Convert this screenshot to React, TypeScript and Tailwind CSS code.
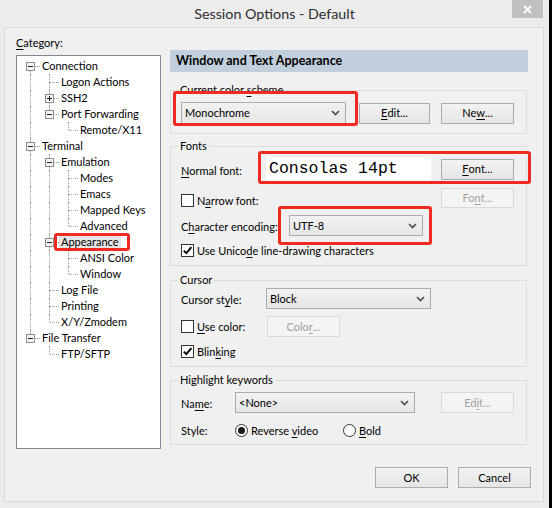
import React from "react";

type TNode = { label: string; children?: TNode[]; selected?: boolean; plus?: boolean };

const tree: TNode[] = [
  {
    label: "Connection",
    children: [
      { label: "Logon Actions" },
      { label: "SSH2", plus: true },
      { label: "Port Forwarding", children: [{ label: "Remote/X11" }] },
    ],
  },
  {
    label: "Terminal",
    children: [
      {
        label: "Emulation",
        children: [{ label: "Modes" }, { label: "Emacs" }, { label: "Mapped Keys" }, { label: "Advanced" }],
      },
      { label: "Appearance", selected: true, children: [{ label: "ANSI Color" }, { label: "Window" }] },
      { label: "Log File" },
      { label: "Printing" },
      { label: "X/Y/Zmodem" },
    ],
  },
  { label: "File Transfer", children: [{ label: "FTP/SFTP" }] },
];

type Row = { node: TNode; guides: boolean[]; isLast: boolean; isFirstRoot: boolean };

function flatten(nodes: TNode[], guides: boolean[], out: Row[], root: boolean) {
  nodes.forEach((n, i) => {
    const isLast = i === nodes.length - 1;
    out.push({ node: n, guides, isLast, isFirstRoot: root && i === 0 });
    if (n.children) flatten(n.children, [...guides, !isLast], out, false);
  });
  return out;
}

const rows = flatten(tree, [], [], true);

function Ul({ children }: { children: React.ReactNode }) {
  return <span className="underline decoration-1 underline-offset-[2px]">{children}</span>;
}

function TreeRow({ r }: { r: Row }) {
  const hasBox = !!r.node.children || !!r.node.plus;
  return (
    <div className="flex h-[16px] items-center">
      {r.guides.map((g, i) => (
        <div key={i} className="relative h-[16px] w-[19px] shrink-0">
          {g && <span className="absolute left-[9px] top-0 h-[16px] border-l border-dotted border-[#a0a0a0]" />}
        </div>
      ))}
      <div className="relative h-[16px] w-[19px] shrink-0">
        {!r.isFirstRoot && (
          <span className="absolute left-[9px] top-0 h-[8px] border-l border-dotted border-[#a0a0a0]" />
        )}
        {!r.isLast && (
          <span className="absolute left-[9px] top-[8px] h-[8px] border-l border-dotted border-[#a0a0a0]" />
        )}
        <span className="absolute left-[10px] top-[8px] w-[9px] border-t border-dotted border-[#a0a0a0]" />
        {hasBox && (
          <span className="absolute left-[5px] top-[4px] flex h-[9px] w-[9px] items-center justify-center border border-[#8f8f8f] bg-[#f3f3f3]">
            <span className="relative block h-[1px] w-[5px] bg-[#1c2433]" />
            {r.node.plus && <span className="absolute left-[3px] top-[1px] block h-[5px] w-[1px] bg-[#1c2433]" />}
          </span>
        )}
      </div>
      <span
        className={
          "h-[16px] whitespace-nowrap px-[2px] leading-[16px] text-black " + (r.node.selected ? "bg-[#e5e5e5]" : "")
        }
      >
        {r.node.label}
      </span>
    </div>
  );
}

function Chevron() {
  return (
    <svg width="9" height="6" viewBox="0 0 9 6" className="shrink-0">
      <path d="M1 1 L4.5 4.5 L8 1" fill="none" stroke="#4a4a4a" strokeWidth="1.6" />
    </svg>
  );
}

function Select({ value, w, h = "h-[21px]" }: { value: string; w: string; h?: string }) {
  return (
    <div
      className={`${w} ${h} flex shrink-0 items-center justify-between border border-[#acacac] bg-gradient-to-b from-[#f2f2f2] to-[#e6e6e6] pl-[3px] pr-[5px]`}
    >
      <span className="whitespace-nowrap text-black">{value}</span>
      <Chevron />
    </div>
  );
}

function Btn({
  children,
  w = "w-[73px]",
  disabled,
  h = "h-[21px]",
}: {
  children: React.ReactNode;
  w?: string;
  disabled?: boolean;
  h?: string;
}) {
  return (
    <div
      className={
        `${w} ${h} flex shrink-0 items-center justify-center border ` +
        (disabled
          ? "border-[#d9d9d9] bg-[#f4f4f4] text-[#a0a0a0]"
          : "border-[#acacac] bg-gradient-to-b from-[#f2f2f2] to-[#e5e5e5] text-black")
      }
    >
      {children}
    </div>
  );
}

function Check({ checked }: { checked?: boolean }) {
  return (
    <span className="flex h-[13px] w-[13px] shrink-0 items-center justify-center border border-[#333] bg-white">
      {checked && (
        <svg width="11" height="11" viewBox="0 0 11 11">
          <path d="M1.8 5.6 L4.3 8.2 L9.4 2.2" fill="none" stroke="#000" strokeWidth="1.9" />
        </svg>
      )}
    </span>
  );
}

function Radio({ checked }: { checked?: boolean }) {
  return (
    <span className="flex h-[13px] w-[13px] shrink-0 items-center justify-center rounded-full border border-[#333] bg-white">
      {checked && <span className="h-[7px] w-[7px] rounded-full bg-[#1a1a1a]" />}
    </span>
  );
}

function Group({ legend, children, cls }: { legend: React.ReactNode; children: React.ReactNode; cls: string }) {
  return (
    <fieldset className={`w-[357px] border border-[#dcdcdc] ${cls}`}>
      <legend className="ml-[7px] px-[2px] leading-[16px] text-black">{legend}</legend>
      <div className="pl-[10px]">{children}</div>
    </fieldset>
  );
}

function RedBox({ cls }: { cls: string }) {
  return <div className={`pointer-events-none absolute rounded-[3px] border-[3px] border-[#ef2a22] ${cls}`} />;
}

export default function App() {
  return (
    <div className="relative flex h-[508px] w-[552px] bg-[#ececec] font-['Lato','Noto_Sans',sans-serif] text-[11px] leading-[16px] text-black">
      <div className="flex w-[549px] flex-col">
        {/* title bar */}
        <div className="relative flex h-[27px] items-center justify-center">
          <span className="text-[14.3px] leading-[20px] text-[#2e2e2e]">Session Options - Default</span>
          <div className="absolute right-[6px] top-0 flex h-[18px] w-[31px] items-center justify-center bg-[#c0c0c0]">
            <svg width="9" height="9" viewBox="0 0 9 9">
              <path d="M1 1 L8 8 M8 1 L1 8" stroke="#fff" strokeWidth="1.8" />
            </svg>
          </div>
        </div>
        {/* body */}
        <div className="ml-[4px] flex h-[475px] w-[540px] border border-[#dadada] bg-[#f0f0f0]">
          {/* left column */}
          <div className="ml-[11px] flex flex-col pt-[7px]">
            <span>
              <Ul>C</Ul>ategory:
            </span>
            <div className="mt-[4px] h-[394px] w-[145px] border border-[#828790] bg-white pl-[4px] pt-[2px]">
              {rows.map((r, i) => (
                <TreeRow key={i} r={r} />
              ))}
            </div>
          </div>
          {/* right column */}
          <div className="ml-[9px] flex flex-col pt-[22px]">
            <div className="flex h-[22px] w-[358px] items-center bg-[#c1cfdc] pl-[6px] text-[12.5px] font-bold">
              Window and Text Appearance
            </div>

            <Group
              cls="mt-[10px] pb-[9px]"
              legend={
                <>
                  Current color <Ul>s</Ul>cheme
                </>
              }
            >
              <div className="flex items-center pt-[4px]">
                <Select value="Monochrome" w="w-[165px]" h="h-[22px]" />
                <div className="ml-[13px]">
                  <Btn w="w-[71px]">
                    <Ul>E</Ul>dit...
                  </Btn>
                </div>
                <div className="ml-[11px]">
                  <Btn>
                    Ne<Ul>w</Ul>...
                  </Btn>
                </div>
              </div>
            </Group>

            <Group cls="mt-[4px] pb-[8px]" legend="Fonts">
              <div className="mt-[3px] flex h-[24px] items-center">
                <span className="mt-[3px] w-[85px] shrink-0">
                  <Ul>N</Ul>ormal font:
                </span>
                <div className="flex h-[24px] w-[165px] shrink-0 items-center bg-white pl-[3px] font-['Liberation_Mono',monospace] text-[16.5px] text-black">
                  Consolas 14pt
                </div>
                <div className="ml-[10px]">
                  <Btn>
                    <Ul>F</Ul>ont...
                  </Btn>
                </div>
              </div>
              <div className="mt-[7px] flex h-[20px]">
                <div className="mt-[6px] flex h-[13px] w-[260px] items-center">
                  <Check />
                  <span className="ml-[3px]">
                    N<Ul>a</Ul>rrow font:
                  </span>
                </div>
                <Btn disabled h="h-[20px]">
                  Fo<Ul>n</Ul>t...
                </Btn>
              </div>
              <div className="mt-[7px] flex items-center">
                <span className="mt-[3px] w-[108px] shrink-0 whitespace-nowrap">
                  C<Ul>h</Ul>aracter encoding:
                </span>
                <Select value="UTF-8" w="w-[134px]" />
              </div>
              <div className="mt-[8px] flex h-[13px] items-center">
                <Check checked />
                <span className="ml-[3px]">
                  Use Unico<Ul>d</Ul>e line-drawing characters
                </span>
              </div>
            </Group>

            <Group cls="mt-[6px] pb-[8px]" legend="Cursor">
              <div className="flex items-center">
                <span className="mt-[3px] w-[85px] shrink-0">
                  Cursor st<Ul>y</Ul>le:
                </span>
                <Select value="Block" w="w-[165px]" />
              </div>
              <div className="mt-[7px] flex items-center">
                <div className="flex w-[86px] shrink-0 items-center">
                  <Check />
                  <span className="ml-[3px]">
                    <Ul>U</Ul>se color:
                  </span>
                </div>
                <Btn disabled>
                  Colo<Ul>r</Ul>...
                </Btn>
              </div>
              <div className="mt-[8px] flex h-[13px] items-center">
                <Check checked />
                <span className="ml-[3px]">
                  Blin<Ul>k</Ul>ing
                </span>
              </div>
            </Group>

            <Group cls="mt-[5px] pb-[7px]" legend="Highlight keywords">
              <div className="mt-[4px] flex items-center">
                <span className="mt-[2px] w-[54px] shrink-0">
                  Na<Ul>m</Ul>e:
                </span>
                <Select value="<None>" w="w-[180px]" />
                <div className="ml-[26px]">
                  <Btn disabled>
                    Ed<Ul>i</Ul>t...
                  </Btn>
                </div>
              </div>
              <div className="mt-[11px] flex h-[13px] items-center">
                <span className="w-[54px] shrink-0">Style:</span>
                <div className="flex w-[108px] shrink-0 items-center">
                  <Radio checked />
                  <span className="ml-[3px]">
                    Reverse <Ul>v</Ul>ideo
                  </span>
                </div>
                <Radio />
                <span className="ml-[3px]">
                  <Ul>B</Ul>old
                </span>
              </div>
            </Group>

            <div className="mt-[22px] flex w-[361px] justify-end gap-[10px]">
              <Btn>OK</Btn>
              <Btn>Cancel</Btn>
            </div>
          </div>
        </div>
      </div>
      <div className="w-[3px] bg-black" />

      <RedBox cls="left-[173px] top-[91px] h-[35px] w-[185px]" />
      <RedBox cls="left-[258px] top-[151px] h-[33px] w-[273px]" />
      <RedBox cls="left-[278px] top-[206px] h-[39px] w-[154px]" />
      <RedBox cls="left-[54px] top-[233px] h-[18px] w-[76px]" />
    </div>
  );
}
